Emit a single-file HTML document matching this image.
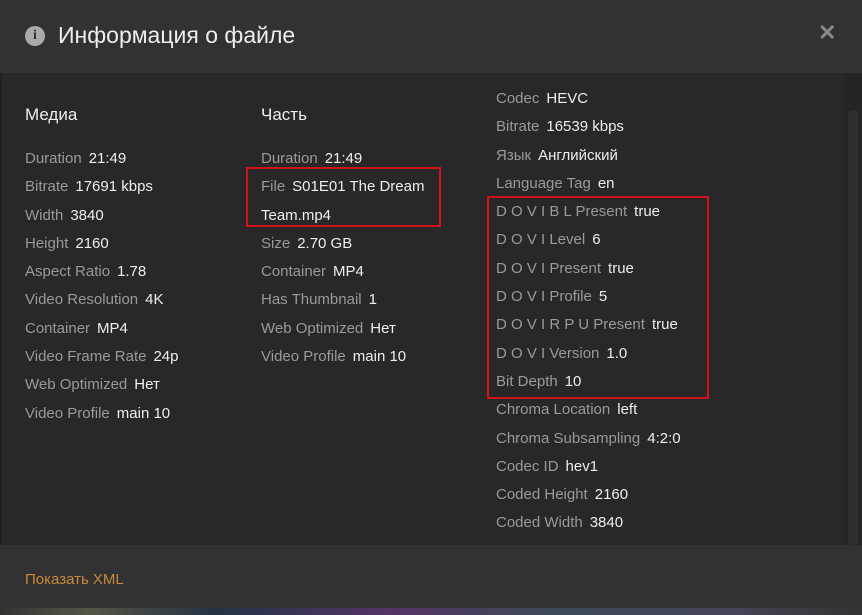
<!DOCTYPE html>
<html><head><meta charset="utf-8"><style>
body{margin:0;width:862px;height:615px;overflow:hidden;background:#222;font-family:"Liberation Sans","Noto Sans CJK SC",sans-serif;position:relative}
.hdr{position:absolute;left:0;top:0;width:862px;height:73px;background:#323232}
.title{position:absolute;left:58px;top:22px;font-size:23px;color:#eee}
.ic{position:absolute;left:25px;top:26px;width:20px;height:20px;border-radius:50%;background:#aaa;color:#323232;font:bold 14px "Liberation Serif",serif;text-align:center;line-height:20px}
.x{position:absolute;left:818px;top:20px;color:#888;font-size:22px;font-weight:bold}
.body{position:absolute;left:0;top:73px;width:862px;height:472px;background:#282828;overflow:hidden;border-left:2px solid #1f1f1f;box-sizing:border-box}
.sb{position:absolute;left:843px;top:73px;width:19px;height:472px;background:#252525}
.th{position:absolute;left:848px;top:110px;width:10px;height:435px;background:#2f2f2f;border-radius:5px}
.col{position:absolute;font-size:15px;line-height:28.3px}
.col div{white-space:nowrap}
.l{color:#9a9a9a;margin-right:7px}
.v{color:#eee}
h3{margin:0 0 16px;font-weight:normal;color:#eee;font-size:17px;line-height:28px}
.ftr{position:absolute;left:0;top:545px;width:862px;height:63px;background:#323232}
.ftr span{position:absolute;left:25px;top:26px;color:#c8893a;font-size:15px}
.strip{position:absolute;left:0;top:608px;width:862px;height:7px;background:linear-gradient(90deg,#333 0,#554 10%,#234 25%,#536 45%,#3a4a55 65%,#445 85%,#333)}
.box{position:absolute;border:2px solid #d0121b}
</style></head><body>
<div class="hdr"><div class="ic">i</div><div class="title">Информация о файле</div><div class="x">✕</div></div>
<div class="body">
<div class="col" style="left:23px;top:28px">
<h3>Медиа</h3>
<div><span class="l">Duration</span><span class="v">21:49</span></div>
<div><span class="l">Bitrate</span><span class="v">17691 kbps</span></div>
<div><span class="l">Width</span><span class="v">3840</span></div>
<div><span class="l">Height</span><span class="v">2160</span></div>
<div><span class="l">Aspect Ratio</span><span class="v">1.78</span></div>
<div><span class="l">Video Resolution</span><span class="v">4K</span></div>
<div><span class="l">Container</span><span class="v">MP4</span></div>
<div><span class="l">Video Frame Rate</span><span class="v">24p</span></div>
<div><span class="l">Web Optimized</span><span class="v">Нет</span></div>
<div><span class="l">Video Profile</span><span class="v">main 10</span></div>
</div>
<div class="col" style="left:259px;top:28px">
<h3>Часть</h3>
<div><span class="l">Duration</span><span class="v">21:49</span></div>
<div><span class="l">File</span><span class="v">S01E01 The Dream</span></div>
<div><span class="v">Team.mp4</span></div>
<div><span class="l">Size</span><span class="v">2.70 GB</span></div>
<div><span class="l">Container</span><span class="v">MP4</span></div>
<div><span class="l">Has Thumbnail</span><span class="v">1</span></div>
<div><span class="l">Web Optimized</span><span class="v">Нет</span></div>
<div><span class="l">Video Profile</span><span class="v">main 10</span></div>
</div>
<div class="col" style="left:494px;top:12px">
<div><span class="l">Codec</span><span class="v">HEVC</span></div>
<div><span class="l">Bitrate</span><span class="v">16539 kbps</span></div>
<div><span class="l">Язык</span><span class="v">Английский</span></div>
<div><span class="l">Language Tag</span><span class="v">en</span></div>
<div><span class="l">D O V I B L Present</span><span class="v">true</span></div>
<div><span class="l">D O V I Level</span><span class="v">6</span></div>
<div><span class="l">D O V I Present</span><span class="v">true</span></div>
<div><span class="l">D O V I Profile</span><span class="v">5</span></div>
<div><span class="l">D O V I R P U Present</span><span class="v">true</span></div>
<div><span class="l">D O V I Version</span><span class="v">1.0</span></div>
<div><span class="l">Bit Depth</span><span class="v">10</span></div>
<div><span class="l">Chroma Location</span><span class="v">left</span></div>
<div><span class="l">Chroma Subsampling</span><span class="v">4:2:0</span></div>
<div><span class="l">Codec ID</span><span class="v">hev1</span></div>
<div><span class="l">Coded Height</span><span class="v">2160</span></div>
<div><span class="l">Coded Width</span><span class="v">3840</span></div>
<div><span class="l">Color Range</span><span class="v">tv</span></div>
</div>
</div>
<div class="sb"></div><div class="th"></div>
<div class="box" style="left:246px;top:167px;width:191px;height:56px"></div>
<div class="box" style="left:487px;top:196px;width:218px;height:199px"></div>
<div class="ftr"><span>Показать XML</span></div>
<div class="strip"></div>
</body></html>
